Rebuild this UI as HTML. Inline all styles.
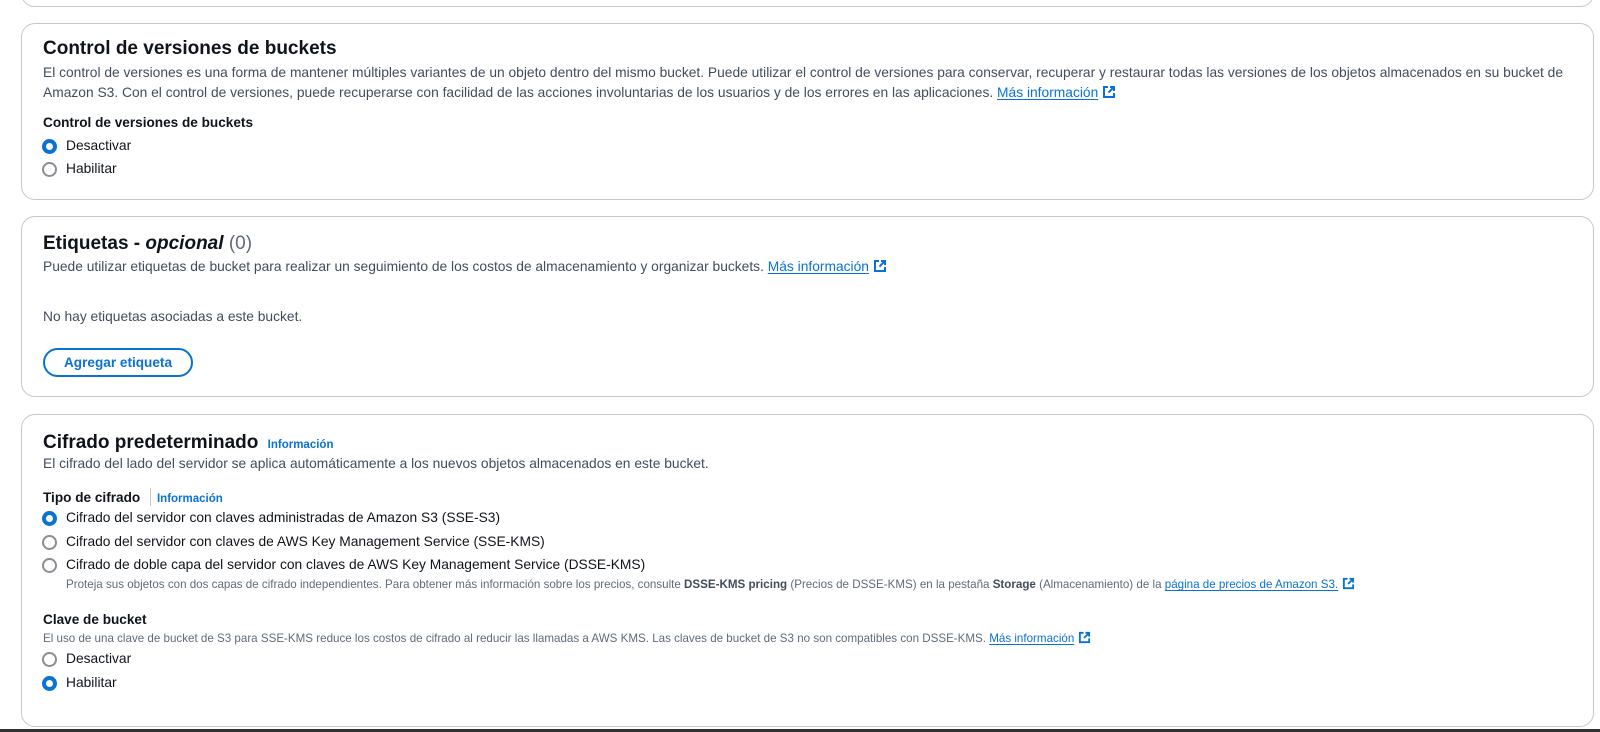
<!DOCTYPE html>
<html><head><meta charset="utf-8"><style>
*{margin:0;padding:0;box-sizing:border-box}
body{width:1600px;height:732px;background:#fff;position:relative;overflow:hidden;font-family:"Liberation Sans",sans-serif;color:#0f141a}
.card{position:absolute;left:21px;width:1573px;border:1px solid #c6c6cd;border-radius:14px;background:#fff}
.t{position:absolute;white-space:nowrap}
.h{font-size:19px;font-weight:bold;color:#0f141a}
.p{font-size:13.8px;color:#414d5c}
.s{font-size:11.6px;color:#5f6b7a}
.lb{font-size:13.6px;font-weight:bold;color:#0f141a}
.r{font-size:13.8px;color:#0f141a}
a{color:#0972d3;text-decoration:underline;text-underline-offset:2px}
.info{color:#0972d3;font-size:11.5px;font-weight:bold}
.rad{position:absolute;width:15px;height:15px;border-radius:50%;border:2px solid #8c8c94;background:#fff}
.rad.on{border:4.5px solid #0972d3}
.ext{display:inline-block;vertical-align:-2px;margin-left:4px}
.btn{position:absolute;left:43px;top:348px;width:150px;height:29px;border:2px solid #0972d3;border-radius:16px;color:#0972d3;font-weight:bold;font-size:13.6px;text-align:center;line-height:25px}
</style></head><body>
<div class="card" style="top:-20px;height:27px;"></div>

<div class="card" style="top:23px;height:177px"></div>
<div class="t h" style="left:43px;top:38px">Control de versiones de buckets</div>
<div class="t p" style="left:43px;top:65px">El control de versiones es una forma de mantener múltiples variantes de un objeto dentro del mismo bucket. Puede utilizar el control de versiones para conservar, recuperar y restaurar todas las versiones de los objetos almacenados en su bucket de</div>
<div class="t p" style="left:43px;top:85px">Amazon S3. Con el control de versiones, puede recuperarse con facilidad de las acciones involuntarias de los usuarios y de los errores en las aplicaciones. <a>Más información</a><svg class="ext" width="14" height="14" viewBox="0 0 14 14"><path d="M6 2H2v10h10V8" fill="none" stroke="#0972d3" stroke-width="2"/><path d="M8 2h4v4M12 2L6.5 7.5" fill="none" stroke="#0972d3" stroke-width="2"/></svg></div>
<div class="t lb" style="left:43px;top:115px">Control de versiones de buckets</div>
<div class="rad on" style="left:42px;top:139px"></div><div class="t r" style="left:66px;top:138px">Desactivar</div>
<div class="rad" style="left:42px;top:162px"></div><div class="t r" style="left:66px;top:161px">Habilitar</div>

<div class="card" style="top:216px;height:181px"></div>
<div class="t h" style="left:43px;top:233px">Etiquetas - <i>opcional</i> <span style="font-weight:normal;color:#5f6b7a">(0)</span></div>
<div class="t p" style="left:43px;top:259px">Puede utilizar etiquetas de bucket para realizar un seguimiento de los costos de almacenamiento y organizar buckets. <a>Más información</a><svg class="ext" width="14" height="14" viewBox="0 0 14 14"><path d="M6 2H2v10h10V8" fill="none" stroke="#0972d3" stroke-width="2"/><path d="M8 2h4v4M12 2L6.5 7.5" fill="none" stroke="#0972d3" stroke-width="2"/></svg></div>
<div class="t p" style="left:43px;top:309px">No hay etiquetas asociadas a este bucket.</div>
<div class="btn">Agregar etiqueta</div>

<div class="card" style="top:414px;height:313px"></div>
<div class="t h" style="left:43px;top:432px">Cifrado predeterminado <span class="info" style="margin-left:4px">Información</span></div>
<div class="t p" style="left:43px;top:456px">El cifrado del lado del servidor se aplica automáticamente a los nuevos objetos almacenados en este bucket.</div>
<div class="t lb" style="left:43px;top:488px">Tipo de cifrado <span style="display:inline-block;width:1px;height:18px;background:#c6c6cd;vertical-align:-4px;margin:0 6px 0 6px"></span><span class="info">Información</span></div>
<div class="rad on" style="left:42px;top:511px"></div><div class="t r" style="left:66px;top:510px">Cifrado del servidor con claves administradas de Amazon S3 (SSE-S3)</div>
<div class="rad" style="left:42px;top:535px"></div><div class="t r" style="left:66px;top:534px">Cifrado del servidor con claves de AWS Key Management Service (SSE-KMS)</div>
<div class="rad" style="left:42px;top:558px"></div><div class="t r" style="left:66px;top:557px">Cifrado de doble capa del servidor con claves de AWS Key Management Service (DSSE-KMS)</div>
<div class="t s" style="left:66px;top:577px">Proteja sus objetos con dos capas de cifrado independientes. Para obtener más información sobre los precios, consulte <b style="color:#414d5c">DSSE-KMS pricing</b> (Precios de DSSE-KMS) en la pestaña <b style="color:#414d5c">Storage</b> (Almacenamiento) de la <a>página de precios de Amazon S3.</a><svg class="ext" width="13" height="13" viewBox="0 0 14 14"><path d="M6 2H2v10h10V8" fill="none" stroke="#0972d3" stroke-width="2"/><path d="M8 2h4v4M12 2L6.5 7.5" fill="none" stroke="#0972d3" stroke-width="2"/></svg></div>
<div class="t lb" style="left:43px;top:612px">Clave de bucket</div>
<div class="t s" style="left:43px;top:631px">El uso de una clave de bucket de S3 para SSE-KMS reduce los costos de cifrado al reducir las llamadas a AWS KMS. Las claves de bucket de S3 no son compatibles con DSSE-KMS. <a>Más información</a><svg class="ext" width="13" height="13" viewBox="0 0 14 14"><path d="M6 2H2v10h10V8" fill="none" stroke="#0972d3" stroke-width="2"/><path d="M8 2h4v4M12 2L6.5 7.5" fill="none" stroke="#0972d3" stroke-width="2"/></svg></div>
<div class="rad" style="left:42px;top:652px"></div><div class="t r" style="left:66px;top:651px">Desactivar</div>
<div class="rad on" style="left:42px;top:676px"></div><div class="t r" style="left:66px;top:675px">Habilitar</div>

<div style="position:absolute;left:0;top:729px;width:1600px;height:3px;background:#333"></div>
</body></html>
